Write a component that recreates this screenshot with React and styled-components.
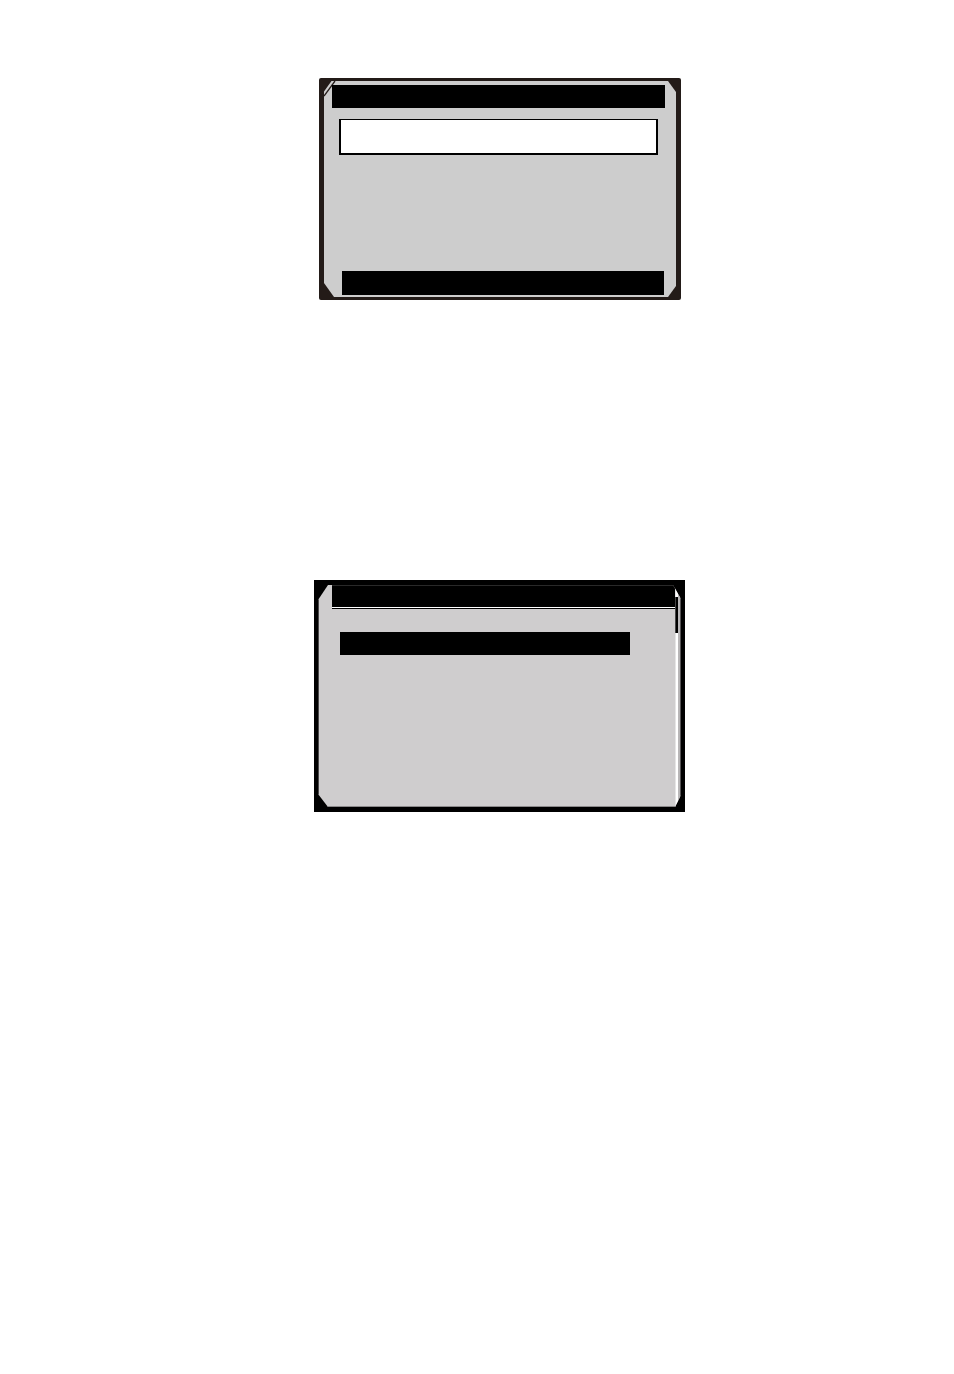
import React from 'react'
import styled, { createGlobalStyle } from 'styled-components'

const App = () => (
  <Page>
    <GlobalStyle />
    <Screens>
      <EntryScreen>
        <EntryPanel>
          <Glint viewBox="0 0 12 16" aria-hidden="true">
            <path d="M0 0H7.5L0 10.5Z" fill="#231b18" />
            <path d="M11 0L0 15" stroke="#231b18" strokeWidth="1.3" />
          </Glint>
          <EntryTitle />
          <Field aria-label="Entry" />
          <EntryFooter />
        </EntryPanel>
      </EntryScreen>

      <MenuScreen>
        <MenuPanel>
          <MenuBody>
            <MenuTitle />
            <Selection />
          </MenuBody>
          <Track>
            <Thumb />
          </Track>
        </MenuPanel>
      </MenuScreen>
    </Screens>
  </Page>
)

export default App

const GlobalStyle = createGlobalStyle`
  * {
    box-sizing: border-box;
  }

  body {
    margin: 0;
    background: #fff;
    font-family: 'Liberation Sans', Arial, sans-serif;
  }
`

const Page = styled.main`
  min-height: 100vh;
  padding: 78px 0 0 46px;
`

const Screens = styled.div`
  display: flex;
  flex-direction: column;
  gap: 280px;
  width: 100%;
  max-width: 372px;
  margin: 0 auto;
`

const Bar = styled.div`
  height: ${props => props.$height || 23}px;
  background: #000;
`

const EntryScreen = styled.section`
  margin: 0 5px;
  padding: 3px 5px;
  border-radius: 2px;
  background: #231b18;
`

const EntryPanel = styled.div`
  position: relative;
  padding: 4px 11px 2px 8px;
  background: #cdcdcd;
  clip-path: polygon(
    0 0,
    calc(100% - 8px) 0,
    100% 11px,
    100% calc(100% - 11px),
    calc(100% - 8px) 100%,
    10px 100%,
    0 calc(100% - 14px)
  );
`

const Glint = styled.svg`
  position: absolute;
  top: 0;
  left: 0;
  width: 12px;
  height: 16px;
  fill: none;
`

const EntryTitle = styled(Bar)`
  position: relative;
`

const Field = styled.input`
  display: block;
  width: calc(100% - 14px);
  height: 36px;
  margin: 11px 7px 0;
  padding: 0 8px;
  border: solid #000;
  border-width: 1px 2px 2px;
  border-radius: 0;
  outline: none;
  background: #fff;
  font: 16px 'Liberation Sans', Arial, sans-serif;
`

const EntryFooter = styled(Bar).attrs({ $height: 24 })`
  margin: 116px 1px 0 10px;
`

const MenuScreen = styled.section`
  width: calc(100% - 1px);
  padding: 5px 4px;
  background: #000;
`

const MenuPanel = styled.div`
  display: flex;
  min-height: 222px;
  background: #cfcdce;
  clip-path: polygon(
    0 15px,
    10px 0,
    calc(100% - 8px) 0,
    100% 14px,
    100% calc(100% - 12px),
    calc(100% - 6px) 100%,
    10px 100%,
    0 calc(100% - 13px)
  );
  box-shadow: inset 1px 0 #4a4849, inset 0 -1px #8b898a;
`

const MenuBody = styled.div`
  flex: 1;
  padding-left: 14px;
`

const MenuTitle = styled(Bar).attrs({ $height: 24 })`
  border-top: 1px solid #292929;
  border-bottom: 1px solid #000;
  box-shadow: inset 0 -1px #fff;
`

const Selection = styled(Bar)`
  margin: 23px 45px 0 8px;
`

const Track = styled.div`
  width: 6px;
  padding-top: 12px;
  border-right: 1px solid #555354;
  background: linear-gradient(
    to right,
    #e6e5e5 1px,
    #fff 1px,
    #fff 3px,
    #b9b7b8 3px
  );
`

const Thumb = styled.div`
  width: 3px;
  height: 36px;
  border-left: 1px solid #444;
  background: #000;
`
